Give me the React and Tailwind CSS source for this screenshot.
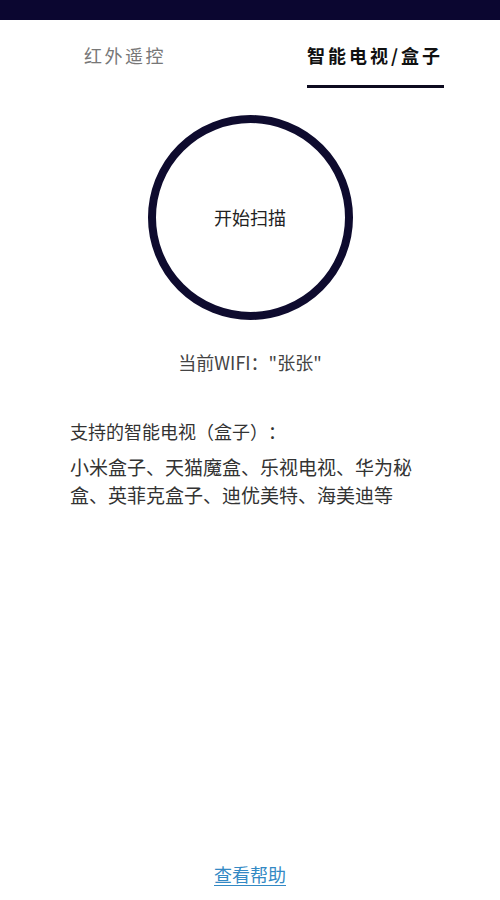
const FONT = { fontFamily: '"Noto Sans CJK SC", "Noto Sans", sans-serif' };

const brands = '小米盒子、天猫魔盒、乐视电视、华为秘盒、英菲克盒子、迪优美特、海美迪等';

export default function App() {
  return (
    <div style={FONT} className="flex min-h-[900px] w-[500px] flex-col bg-white [text-spacing-trim:space-all]">
      <div className="h-[20px] bg-[#0b0630]" />

      {/* tabs */}
      <div className="grid grid-cols-2">
        <div className="flex justify-center pt-[23px]">
          <span className="text-[18px] leading-[24px] tracking-[2.5px] text-[#777]">红外遥控</span>
        </div>
        <div className="flex flex-col items-center pt-[23px]">
          <span className="text-[18px] font-bold leading-[24px] tracking-[3px] text-[#111]">智能电视/盒子</span>
          <div className="mt-[18px] h-[3px] w-[137px] bg-[#0d0b1f]" />
        </div>
      </div>

      {/* scan button */}
      <div className="mt-[27px] flex justify-center">
        <button className="flex h-[205px] w-[205px] items-center justify-center rounded-full border-[8px] border-[#0e0b2e] bg-white text-[18px] text-[#222]">
          开始扫描
        </button>
      </div>

      <p className="mt-[30px] text-center text-[18px] leading-[24px] text-[#444]">当前WIFI："张张"</p>

      <div className="px-[70px]">
        <p className="mt-[45px] text-[18px] leading-[24px] text-[#333]">支持的智能电视（盒子）：</p>
        <p className="mt-[10px] w-[356px] text-[19px] leading-[28px] text-[#333]">{brands}</p>
      </div>

      <div className="mt-auto pb-[13px] text-center">
        <a href="#" className="text-[18px] leading-[24px] text-[#3389c4] underline underline-offset-[3px]">查看帮助</a>
      </div>
    </div>
  );
}
